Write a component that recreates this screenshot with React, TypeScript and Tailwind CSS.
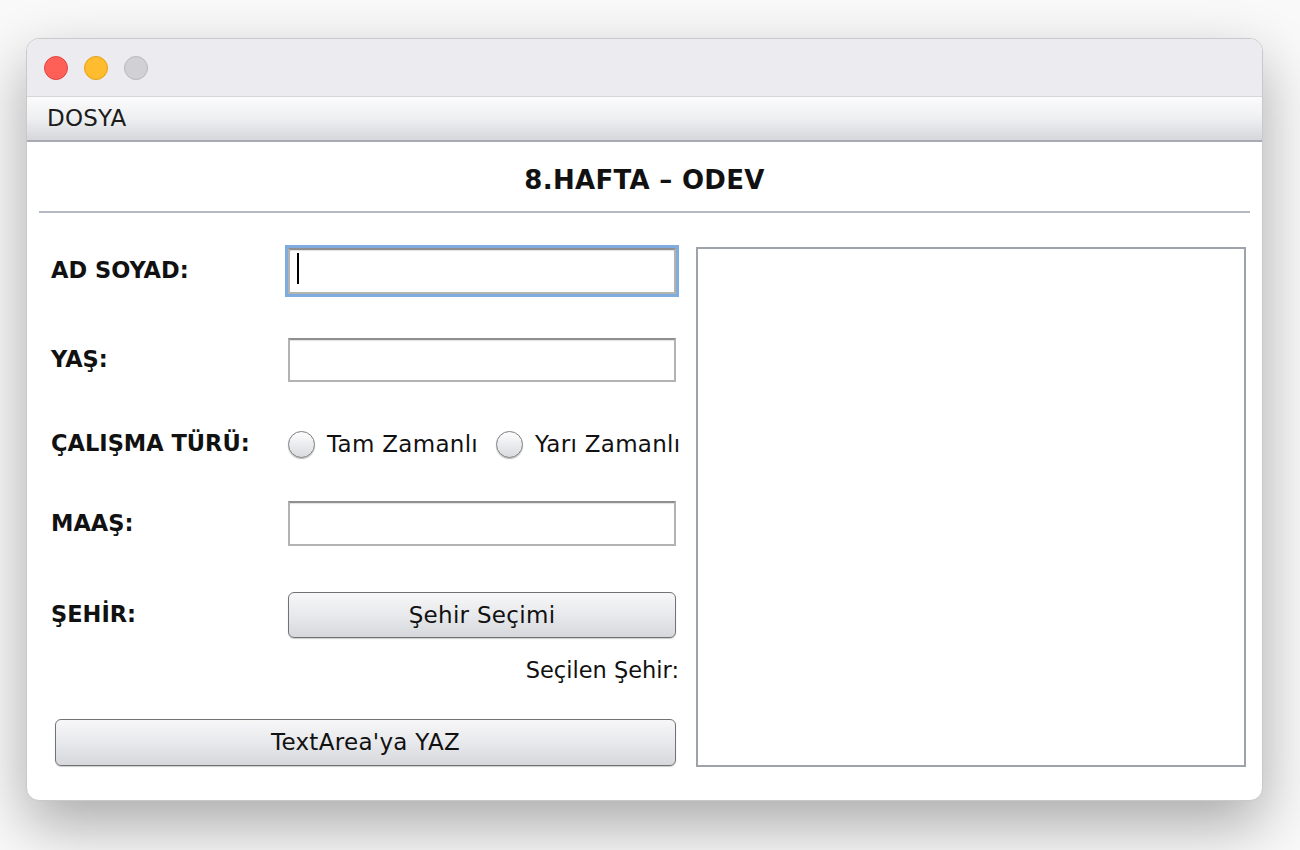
import React from "react";

const font = { fontFamily: '"DejaVu Sans", "Liberation Sans", sans-serif' };

function TextField({ focused }: { focused?: boolean }) {
  return (
    <div
      className={
        "relative w-[388px] h-full bg-white border-2 border-[#b3b3b3] border-t-[#8f8f8f] shadow-[inset_0_1px_1px_rgba(0,0,0,0.12)] " +
        (focused ? "ring-[3px] ring-[#7fabdf]" : "")
      }
    >
      {focused && <div className="absolute left-[7px] top-[3px] w-[2px] h-[31px] bg-black" />}
    </div>
  );
}

function Radio({ label }: { label: string }) {
  return (
    <div className="flex items-center shrink-0">
      <div className="w-[27px] h-[27px] shrink-0 rounded-full border border-[#7e7e82] bg-gradient-to-b from-[#fdfdfd] to-[#d9dbe0] shadow-[0_1px_1px_rgba(0,0,0,0.3)]" />
      <span className="ml-[12px] whitespace-nowrap text-[23px] tracking-[0.3px] text-[#111]">{label}</span>
    </div>
  );
}

function MacButton({ label, className }: { label: string; className: string }) {
  return (
    <div
      className={
        "flex items-center justify-center rounded-[6px] border border-[#727276] bg-gradient-to-b from-[#f7f7f8] via-[#e8e9ec] to-[#d7d8dc] shadow-[0_1px_1px_rgba(0,0,0,0.2)] text-[23px] tracking-[0.3px] text-[#111] " +
        className
      }
    >
      {label}
    </div>
  );
}

function Label({ children }: { children: React.ReactNode }) {
  return <span className="w-[237px] shrink-0 whitespace-nowrap font-bold text-[22.5px]">{children}</span>;
}

export default function App() {
  return (
    <div className="w-[1300px] h-[850px] bg-[#f9f9f9] pt-[38px] pl-[26px] overflow-hidden" style={font}>
      <div className="w-[1237px] h-[763px] rounded-[13px] border border-[#c9c9cc] overflow-hidden bg-white flex flex-col shadow-[0_24px_60px_rgba(0,0,0,0.32)]">
        {/* title bar */}
        <div className="h-[58px] bg-[#ecebf0] border-b border-[#d6d6da] flex items-center pl-[17px] gap-[16px]">
          <div className="w-[24px] h-[24px] rounded-full bg-[#fe5f57] border border-[#e2463f]" />
          <div className="w-[24px] h-[24px] rounded-full bg-[#febc2e] border border-[#e1a116]" />
          <div className="w-[24px] h-[24px] rounded-full bg-[#d1d0d5] border border-[#b9b8bd]" />
        </div>
        {/* menu bar */}
        <div className="h-[45px] bg-gradient-to-b from-[#fbfbfc] via-[#eeeff1] to-[#d5d7db] border-b-2 border-[#a7aab1] flex items-center pl-[20px]">
          <span className="text-[23px] tracking-[0.2px] text-[#1c1c1c]">DOSYA</span>
        </div>
        {/* content */}
        <div className="flex-1 flex flex-col">
          <div className="h-[69px] pt-[8px] flex items-center justify-center">
            <span className="text-[26px] tracking-[0.3px] font-bold text-[#111]">8.HAFTA – ODEV</span>
          </div>
          <div className="mx-[12px] h-[2px] bg-[#b6bac4]" />
          <div className="flex pt-[34px] pl-[24px]">
            <div className="w-[625px] shrink-0 flex flex-col text-[23px] text-[#111]">
              <div className="h-[48px] flex items-center">
                <Label>AD SOYAD:</Label>
                <div className="h-[46px] flex">
                  <TextField focused />
                </div>
              </div>
              <div className="mt-[43px] h-[44px] flex items-center">
                <Label>YAŞ:</Label>
                <div className="h-[44px] flex">
                  <TextField />
                </div>
              </div>
              <div className="mt-[48px] h-[28px] flex items-center">
                <Label>ÇALIŞMA TÜRÜ:</Label>
                <div className="flex items-center gap-[18px]">
                  <Radio label="Tam Zamanlı" />
                  <Radio label="Yarı Zamanlı" />
                </div>
              </div>
              <div className="mt-[43px] h-[45px] flex items-center">
                <Label>MAAŞ:</Label>
                <div className="h-[45px] flex">
                  <TextField />
                </div>
              </div>
              <div className="mt-[46px] h-[46px] flex items-center">
                <Label>ŞEHİR:</Label>
                <MacButton label="Şehir Seçimi" className="w-[388px] h-[46px]" />
              </div>
              <div className="mt-[21px] h-[24px] flex items-center justify-end">
                <span className="mr-[-3px] text-[22.5px]">Seçilen Şehir:</span>
              </div>
              <div className="mt-[36px] flex">
                <MacButton label="TextArea'ya YAZ" className="ml-[4px] w-[621px] h-[47px]" />
              </div>
            </div>
            <div className="ml-[20px] w-[550px] h-[520px] border-2 border-[#9ea2ab] bg-white" />
          </div>
        </div>
      </div>
    </div>
  );
}
